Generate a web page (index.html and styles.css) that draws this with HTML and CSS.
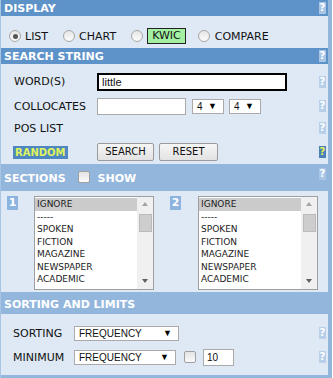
FILE: index.html
```html
<!DOCTYPE html>
<html lang="en">
<head>
  <meta charset="UTF-8">
  <title>Search form</title>
  <link rel="stylesheet" href="styles.css">
</head>
<body>
  <div class="panel">
    <!-- display -->
    <div class="head dark">
      <span>DISPLAY</span>
      <span class="help">?</span>
    </div>
    <div class="radios">
      <span class="radio on"></span><span class="rlabel">LIST</span>
      <span class="radio"></span><span class="rlabel">CHART</span>
      <span class="radio"></span><span class="rlabel kwic">KWIC</span>
      <span class="radio"></span><span class="rlabel">COMPARE</span>
    </div>

    <!-- search string -->
    <div class="head dark">
      <span>SEARCH STRING</span>
      <span class="help">?</span>
    </div>
    <div class="search">
      <div class="row r1">
        <span class="label">WORD(S)</span>
        <span class="word">little</span>
        <span class="help soft">?</span>
      </div>
      <div class="row r2">
        <span class="label">COLLOCATES</span>
        <span class="text coll"></span>
        <span class="sel small">4 <b>▼</b></span>
        <span class="sel small">4 <b>▼</b></span>
        <span class="help soft">?</span>
      </div>
      <div class="row r3">
        <span class="label">POS LIST</span>
        <span class="help soft">?</span>
      </div>
      <div class="row r4">
        <span class="label"><span class="random">RANDOM</span></span>
        <span class="btn b-search">SEARCH</span>
        <span class="btn b-reset">RESET</span>
        <span class="help yellow">?</span>
      </div>
    </div>

    <!-- sections -->
    <div class="head light sections">
      <span>SECTIONS</span>
      <span class="check"></span>
      <span>SHOW</span>
      <span class="help">?</span>
    </div>
    <div class="lists">
      <span class="num n1">1</span>
      <div class="listbox">
        <div class="items">
          <div class="sel-item">IGNORE</div>
          <div>-----</div>
          <div>SPOKEN</div>
          <div>FICTION</div>
          <div>MAGAZINE</div>
          <div>NEWSPAPER</div>
          <div>ACADEMIC</div>
        </div>
        <div class="scroll"><i class="up"></i><i class="thumb"></i><i class="down"></i></div>
      </div>
      <span class="num n2">2</span>
      <div class="listbox">
        <div class="items">
          <div class="sel-item">IGNORE</div>
          <div>-----</div>
          <div>SPOKEN</div>
          <div>FICTION</div>
          <div>MAGAZINE</div>
          <div>NEWSPAPER</div>
          <div>ACADEMIC</div>
        </div>
        <div class="scroll"><i class="up"></i><i class="thumb"></i><i class="down"></i></div>
      </div>
    </div>

    <!-- sorting -->
    <div class="head light sorting">
      <span>SORTING AND LIMITS</span>
    </div>
    <div class="sort">
      <div class="row s1">
        <span class="label">SORTING</span>
        <span class="sel wide">FREQUENCY <b>▼</b></span>
        <span class="help soft">?</span>
      </div>
      <div class="row s2">
        <span class="label">MINIMUM</span>
        <span class="sel mid">FREQUENCY <b>▼</b></span>
        <span class="check"></span>
        <span class="text num-in">10</span>
        <span class="help soft">?</span>
      </div>
    </div>
    <div class="foot"></div>
  </div>
</body>
</html>
```

FILE: styles.css
```css
body {
  margin: 0;
  background: #fff;
  font-family: 'DejaVu Sans', Verdana, sans-serif;
  font-size: 11px;
  color: #111;
}

.panel {
  width: 327px;
  height: 378px;
  background: #dee9f5;
  border-left: 1px solid #a9c5e4;
  border-right: 4px solid #93b6dc;
  overflow: hidden;
}

/* section headers */
.head {
  display: flex;
  align-items: center;
  color: #fff;
  font-weight: bold;
  padding-left: 3px;
}
.head.dark {
  background: #5e93c9;
  height: 16px;
}
.head.light {
  background: #93b6dd;
}

.help {
  margin-left: auto;
  margin-right: 2px;
  width: 7px;
  height: 12px;
  line-height: 12px;
  font-size: 10px;
  font-weight: bold;
  text-align: center;
  color: #fff;
  background: #a9c6e7;
}
.help.soft {
  background: #b8cfe9;
}
.help.yellow {
  background: #4a7fba;
  color: #e9f25a;
}

/* display radios */
.radios {
  display: flex;
  align-items: center;
  height: 20px;
  padding: 10px 0 2px 8px;
}
.radio {
  width: 12px;
  height: 12px;
  border-radius: 50%;
  border: 1px solid #a6a6a6;
  background: linear-gradient(#e6e6e6, #fbfbfb);
  box-sizing: border-box;
  margin-right: 4px;
  position: relative;
}
.radio.on::after {
  content: "";
  position: absolute;
  left: 2.5px;
  top: 2.5px;
  width: 5px;
  height: 5px;
  border-radius: 50%;
  background: #555;
}
.rlabel {
  margin-right: 15px;
}
.kwic {
  background: #a3f0a3;
  border: 1px solid #222;
  padding: 0 4px;
  line-height: 14px;
  margin-left: 0;
  margin-right: 12px;
}
.kwic + .radio {
  margin-right: 5px;
}

/* search string */
.search {
  display: flex;
  flex-direction: column;
  height: 100px;
  padding-top: 8px;
  box-sizing: border-box;
}
.row {
  display: flex;
  align-items: center;
  height: 20px;
  flex-shrink: 0;
}
.row .label {
  width: 83px;
  padding-left: 13px;
  flex-shrink: 0;
}
.r1 { height: 19px; }
.r2 { margin-top: 5px; }
.r3 { margin-top: 2px; }
.r4 { margin-top: 4px; }

.word {
  width: 183px;
  height: 14px;
  border: 2px solid #000;
  background: #fff;
  padding-left: 3px;
  line-height: 14px;
  font-family: 'Liberation Sans', Arial, sans-serif;
  font-size: 11px;
}
.text {
  height: 15px;
  background: #fff;
  border: 1px solid #aaa;
}
.coll {
  width: 87px;
  margin-right: 6px;
}
.sel {
  display: flex;
  align-items: center;
  background: #fff;
  border: 1px solid #aaa;
  height: 13px;
  padding-left: 4px;
  font-family: 'Liberation Sans', Arial, sans-serif;
  font-size: 10px;
}
.sel b {
  margin-left: auto;
  margin-right: 6px;
  font-size: 9px;
  font-weight: normal;
  color: #000;
}
.sel.small {
  width: 26px;
  margin-right: 5px;
}

.r4 .label {
  padding-left: 12px;
  width: 84px;
}
.random {
  display: inline-block;
  padding: 0 2px;
  background: #4f87c1;
  color: #dff45e;
  font-weight: bold;
  font-size: 10px;
  line-height: 13px;
}
.btn {
  height: 16px;
  line-height: 16px;
  border: 1px solid #9b9b9b;
  border-radius: 2px;
  background: linear-gradient(#f6f6f6, #e2e2e2);
  font-size: 10px;
  text-align: center;
}
.b-search { width: 55px; margin-right: 5px; }
.b-reset { width: 57px; }

/* sections */
.sections {
  height: 27px;
  align-items: flex-start;
}
.sections > span:first-child {
  margin-top: 8px;
  margin-right: 12px;
}
.sections > span:nth-child(3) {
  margin-top: 8px;
}
.sections .help {
  margin-top: 4px;
}
.check {
  width: 12px;
  height: 12px;
  border: 1px solid #a0a0a0;
  border-radius: 2px;
  background: linear-gradient(#e4e4e4, #fafafa);
  box-sizing: border-box;
}
.sections .check {
  margin-top: 7px;
  margin-right: 8px;
}

.lists {
  display: flex;
  align-items: flex-start;
  height: 101px;
  padding-top: 5px;
  box-sizing: border-box;
}
.num {
  width: 11px;
  height: 14px;
  line-height: 14px;
  background: #8db3df;
  color: #fff;
  font-weight: bold;
  text-align: center;
}
.n1 { margin: 0 16px 0 6px; }
.n2 { margin: 0 17px 0 16px; }
.listbox {
  display: flex;
  width: 118px;
  height: 92px;
  border: 1px solid #9f9f9f;
  background: #fff;
  overflow: hidden;
}
.items {
  flex: 1;
  font-size: 9px;
  line-height: 12.5px;
  color: #222;
}
.items div {
  padding-left: 2px;
  white-space: nowrap;
}
.items .sel-item {
  background: #cbcbcb;
  margin-top: 1px;
}
.scroll {
  width: 16px;
  background: #f0f0f0;
  position: relative;
}
.scroll i {
  position: absolute;
  left: 2px;
}
.scroll .up {
  top: 5px;
  left: 5px;
  border: 3px solid transparent;
  border-bottom: 4px solid #a3a3a3;
  border-top: 0;
}
.scroll .down {
  bottom: 6px;
  left: 5px;
  border: 3px solid transparent;
  border-top: 4px solid #606060;
  border-bottom: 0;
}
.scroll .thumb {
  top: 17px;
  width: 11px;
  height: 16px;
  background: #cdcdcd;
  border: 1px solid #bbb;
}

/* sorting */
.sorting {
  height: 22px;
  align-items: flex-end;
}
.sorting span {
  margin-bottom: 3px;
}
.sort {
  display: flex;
  flex-direction: column;
  padding-top: 9px;
}
.sort .label {
  width: 61px;
  padding-left: 12px;
}
.s2 { margin-top: 4px; }
.sel.wide { width: 99px; }
.sel.mid { width: 96px; margin-right: 8px; }
.s2 .check { margin-right: 7px; }
.num-in {
  width: 26px;
  height: 15px;
  line-height: 15px;
  padding-left: 3px;
  font-family: 'Liberation Sans', Arial, sans-serif;
  font-size: 10px;
}

.foot {
  margin-top: 8px;
  height: 6px;
  background: #93b6dd;
}
```
